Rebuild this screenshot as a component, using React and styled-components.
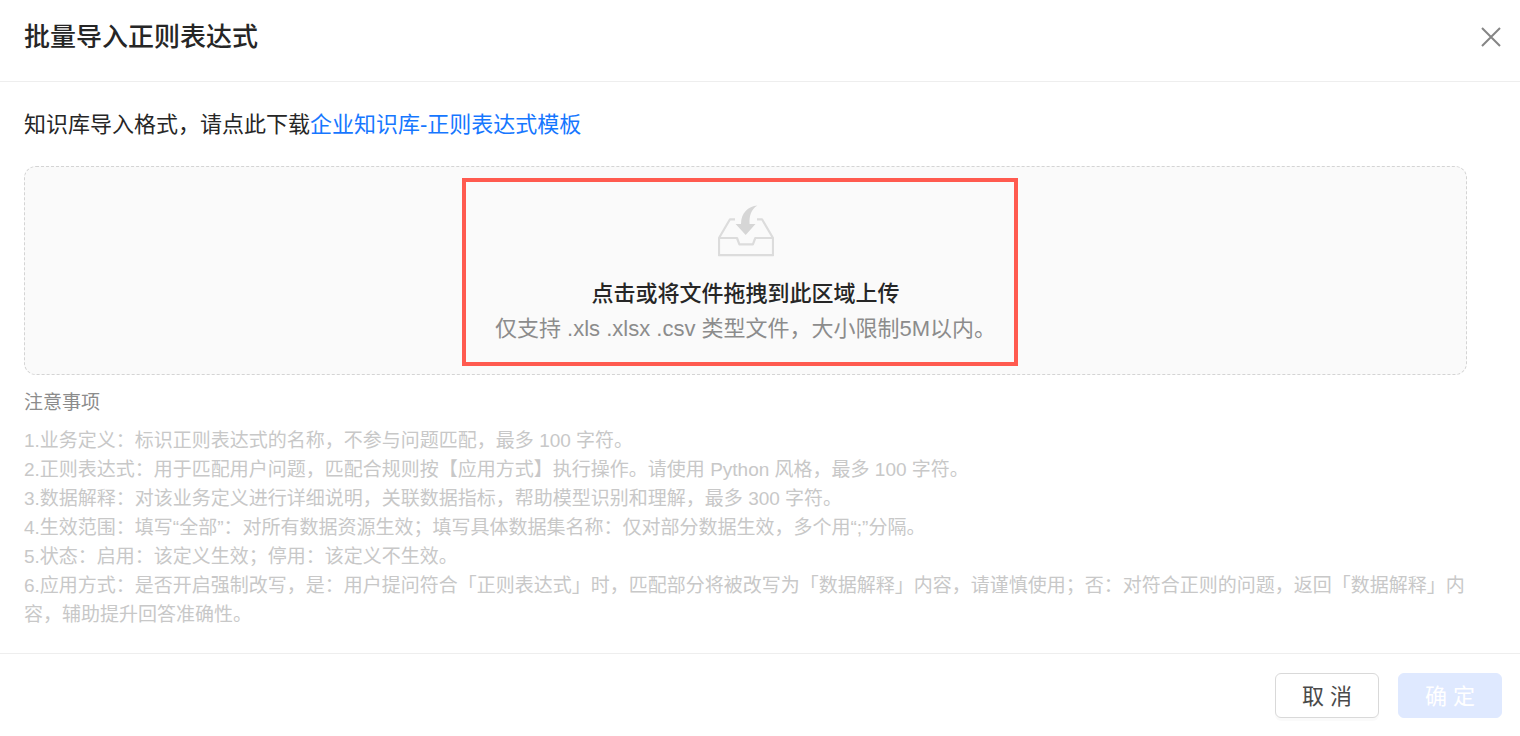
import { useState } from "react";
import styled, { createGlobalStyle } from "styled-components";

const notes = [
    "1.业务定义：标识正则表达式的名称，不参与问题匹配，最多 100 字符。",
    "2.正则表达式：用于匹配用户问题，匹配合规则按【应用方式】执行操作。请使用 Python 风格，最多 100 字符。",
    "3.数据解释：对该业务定义进行详细说明，关联数据指标，帮助模型识别和理解，最多 300 字符。",
    "4.生效范围：填写“全部”：对所有数据资源生效；填写具体数据集名称：仅对部分数据生效，多个用“;”分隔。",
    "5.状态：启用：该定义生效；停用：该定义不生效。",
    "6.应用方式：是否开启强制改写，是：用户提问符合「正则表达式」时，匹配部分将被改写为「数据解释」内容，请谨慎使用；否：对符合正则的问题，返回「数据解释」内容，辅助提升回答准确性。",
];

function CloseIcon() {
    return (
        <svg width="20" height="20" viewBox="0 0 20 20" fill="none" stroke="#858585" strokeWidth="2" aria-hidden="true">
            <path d="M1 1L19 19M19 1L1 19" />
        </svg>
    )
}

function InboxIcon() {
    return (
        <svg width="56" height="52" viewBox="0 0 56 52" fill="none" aria-hidden="true">
            <path
                d="M17 14.3H12L1 33V50.2H55V33L44 14.3H39M1 33H19L21.4 39.3H34.9L37.3 33H55"
                stroke="#DCDCDC"
                strokeWidth="2.2"
                strokeLinejoin="round"
            />
            <path d="M39.4 0.6C30 1.5 23 8 23 19H17.6L27.7 29.9L37.5 19H31.6C31.2 11 33 4.5 39.4 0.6Z" fill="#D6D6D6" />
        </svg>
    )
}

export default function App() {
    const [file, setFile] = useState(null)

    return (
        <>
            <GlobalStyle />
            <Dialog role="dialog" aria-labelledby="dialog-title" lang="zh-CN">
                <Header>
                    <Title id="dialog-title">批量导入正则表达式</Title>
                    <CloseButton type="button" aria-label="关闭">
                        <CloseIcon />
                    </CloseButton>
                </Header>
                <Body>
                    <Intro>
                        知识库导入格式，请点此下载<a href="#template">企业知识库-正则表达式模板</a>
                    </Intro>
                    <DropZone>
                        <input type="file" accept=".xls,.xlsx,.csv" onChange={(e) => setFile(e.target.files[0])} />
                        <InboxIcon />
                        <strong>点击或将文件拖拽到此区域上传</strong>
                        <span>仅支持 .xls .xlsx .csv 类型文件，大小限制5M以内。</span>
                        <Highlight />
                    </DropZone>
                    <NotesTitle>注意事项</NotesTitle>
                    <Notes>
                        {notes.map((note) => <li key={note}>{note}</li>)}
                    </Notes>
                </Body>
                <Footer>
                    <Button type="button">取 消</Button>
                    <Button type="button" $primary disabled={!file}>确 定</Button>
                </Footer>
            </Dialog>
        </>
    )
}

const GlobalStyle = createGlobalStyle`
    * {
        box-sizing: border-box;
    }

    body {
        margin: 0;
        background-color: #FFFFFF;
    }

    body, button, input {
        font-family: "Liberation Sans", "Noto Sans CJK SC", sans-serif;
    }
`

const Dialog = styled.div`
    display: flex;
    flex-direction: column;
    color: #262626;
`

const Header = styled.header`
    display: flex;
    align-items: center;
    justify-content: space-between;
    padding: 17px 19px 24px 24px;
    border-bottom: 1px solid #EEEEEE;
`

const Title = styled.h1`
    margin: 0;
    font-size: 26px;
    line-height: 40px;
    font-weight: 500;
`

const CloseButton = styled.button`
    display: flex;
    padding: 0;
    border: none;
    background: none;
    cursor: pointer;
`

const Body = styled.main`
    padding: 24px;
`

const Intro = styled.p`
    margin: 0 0 22px;
    font-size: 22px;
    line-height: 38px;

    a {
        color: #1677FF;
        text-decoration: none;
    }
`

const DropZone = styled.label`
    position: relative;
    display: flex;
    flex-direction: column;
    align-items: center;
    margin-right: 29px;
    padding: 38px 16px 28px;
    border: 1px dashed #D4D4D4;
    border-radius: 12px;
    background-color: #FAFAFA;
    font-size: 22px;
    line-height: 35px;
    cursor: pointer;

    input {
        position: absolute;
        width: 1px;
        height: 1px;
        opacity: 0;
    }

    svg {
        margin-bottom: 19px;
    }

    strong {
        font-weight: 500;
    }

    span {
        color: #8C8C8C;
    }
`

const Highlight = styled.i`
    position: absolute;
    top: 11px;
    bottom: 8px;
    left: calc(50% - 284px);
    width: 556px;
    border: 4px solid #FF5A4F;
    pointer-events: none;
`

const NotesTitle = styled.h2`
    margin: 13px 0 8px;
    color: #8C8C8C;
    font-size: 19px;
    line-height: 30px;
    font-weight: 400;
`

const Notes = styled.ul`
    margin: 0;
    padding: 0 16px 0 0;
    list-style: none;
    color: #C8C8C8;
    font-size: 19px;
    line-height: 29px;
`

const Footer = styled.footer`
    display: flex;
    justify-content: flex-end;
    gap: 19px;
    padding: 19px 18px;
    border-top: 1px solid #EEEEEE;
`

const Button = styled.button`
    width: 104px;
    height: 45px;
    padding: 0 0 4px;
    border: 1px solid ${({ $primary }) => $primary ? "#DFE9FF" : "#D9D9D9"};
    border-radius: 6px;
    background-color: ${({ $primary }) => $primary ? "#DFE9FF" : "#FFFFFF"};
    box-shadow: ${({ $primary }) => $primary ? "none" : "0 3px 0 rgba(0, 0, 0, 0.02)"};
    color: ${({ $primary }) => $primary ? "#FFFFFF" : "#4A4A4A"};
    font-size: 22px;
    cursor: pointer;

    &&:disabled{
        cursor: not-allowed;
    }
`
